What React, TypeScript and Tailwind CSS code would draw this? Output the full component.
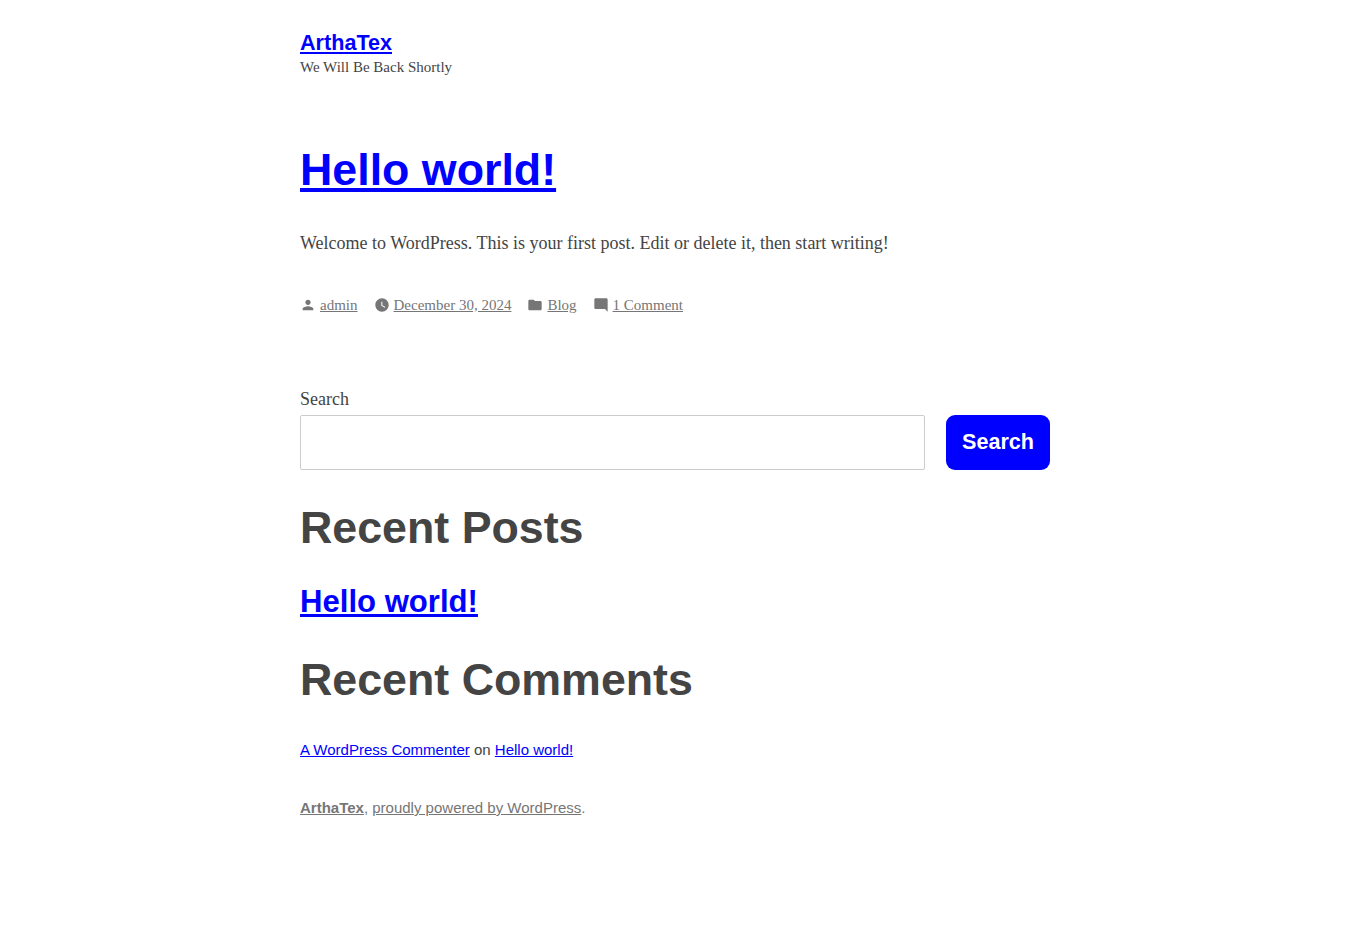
import React from "react"

const META = [
  {
    label: "admin",
    path: "M12 12c2.21 0 4-1.79 4-4s-1.79-4-4-4-4 1.79-4 4 1.79 4 4 4zm0 2c-2.67 0-8 1.34-8 4v2h16v-2c0-2.66-5.33-4-8-4z",
  },
  {
    label: "December 30, 2024",
    path: "M12 2C6.5 2 2 6.5 2 12s4.5 10 10 10 10-4.5 10-10S17.5 2 12 2zm4.2 14.2L11 13V7h1.5v5.2l4.5 2.7-.8 1.3z",
  },
  {
    label: "Blog",
    path: "M10 4H4c-1.1 0-1.99.9-1.99 2L2 18c0 1.1.9 2 2 2h16c1.1 0 2-.9 2-2V8c0-1.1-.9-2-2-2h-8l-2-2z",
  },
  {
    label: "1 Comment",
    path: "M21.99 4c0-1.1-.89-2-1.99-2H4c-1.1 0-2 .9-2 2v12c0 1.1.9 2 2 2h14l4 4-.01-18z",
  },
]

const App = () => {
  return (
    <div className="mx-auto w-[750px] font-['Liberation_Serif',serif] text-[#444]">
      <header className="pt-[30px]">
        <h1 className="h-[26px] font-['Liberation_Sans',sans-serif] text-[21.6px] leading-[26px] font-bold text-[#00f]">
          <a href="#" className="underline">ArthaTex</a>
        </h1>
        <p className="h-[22px] text-[15px] leading-[22px]">We Will Be Back Shortly</p>
      </header>

      <main>
        <article className="pt-[64px]">
          <h2 className="h-[56px] font-['Liberation_Sans',sans-serif] text-[44.75px] leading-[54px] font-bold text-[#00f]">
            <a href="#" className="underline">Hello world!</a>
          </h2>
          <p className="mt-[29px] text-[18px] leading-[32px]">
            Welcome to WordPress. This is your first post. Edit or delete it, then start writing!
          </p>
          <div className="mt-[34px] flex h-[24px] items-center gap-4 text-[15px] text-[#767676]">
            {META.map((item) => (
              <span key={item.label} className="flex items-center gap-1">
                <svg viewBox="0 0 24 24" className="size-4" fill="currentColor">
                  <path d={item.path} />
                </svg>
                <a href="#" className="underline">{item.label}</a>
              </span>
            ))}
          </div>
        </article>

        <form className="mt-[66px]" onSubmit={(e) => e.preventDefault()}>
          <label htmlFor="search" className="block h-[32px] text-[18px] leading-[32px]">Search</label>
          <div className="flex h-[55px] gap-[21px]">
            <input id="search" className="w-[625px] rounded-[2px] border border-[#ccc] px-2 outline-none" />
            <button className="w-[104px] rounded-[9px] bg-[#00f] font-['Liberation_Sans',sans-serif] text-[21.6px] font-bold text-white">
              Search
            </button>
          </div>
        </form>

        <section className="font-['Liberation_Sans',sans-serif]">
          <h2 className="mt-[30px] h-[56px] text-[44.75px] leading-[54px] font-bold">Recent Posts</h2>
          <p className="mt-[26px] h-[40px] text-[31.1px] leading-[40px] font-bold text-[#00f]">
            <a href="#" className="underline">Hello world!</a>
          </p>
          <h2 className="mt-[30px] h-[56px] text-[44.75px] leading-[54px] font-bold">Recent Comments</h2>
          <p className="mt-[32px] h-[20px] text-[15px] leading-[20px]">
            <a href="#" className="text-[#00f] underline">A WordPress Commenter</a> on{" "}
            <a href="#" className="text-[#00f] underline">Hello world!</a>
          </p>
        </section>
      </main>

      <footer className="mt-[38px] h-[20px] font-['Liberation_Sans',sans-serif] text-[15px] leading-[20px] text-[#767676]">
        <a href="#" className="font-bold underline">ArthaTex</a>,{" "}
        <a href="#" className="underline">proudly powered by WordPress</a>.
      </footer>
    </div>
  )
}

export default App
